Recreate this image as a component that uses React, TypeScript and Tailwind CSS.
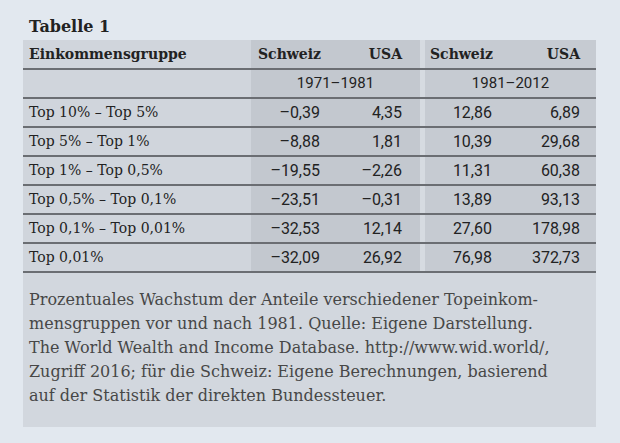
const serif = "font-['DejaVu_Serif','Liberation_Serif',serif]";
const sans = "font-['Roboto','Noto_Sans',sans-serif]";

// Zeilen der Tabelle: Gruppe, Schweiz/USA 1971–1981, Schweiz/USA 1981–2012
const rows = [
  ["Top 10% – Top 5%", "–0,39", "4,35", "12,86", "6,89"],
  ["Top 5% – Top 1%", "–8,88", "1,81", "10,39", "29,68"],
  ["Top 1% – Top 0,5%", "–19,55", "–2,26", "11,31", "60,38"],
  ["Top 0,5% – Top 0,1%", "–23,51", "–0,31", "13,89", "93,13"],
  ["Top 0,1% – Top 0,01%", "–32,53", "12,14", "27,60", "178,98"],
  ["Top 0,01%", "–32,09", "26,92", "76,98", "372,73"],
];

const grid = "grid grid-cols-[228px_76px_93px_5px_74px_97px] border-b-2 border-[#6b6e73]";

export default function App() {
  return (
    <div className="w-[620px] h-[443px] bg-[#e2e8ef] px-[23px] pt-[14px] text-[#222]">
      <h1 className={`${serif} font-bold text-[16px] leading-[26px] pl-[6px]`}>Tabelle 1</h1>

      <div className="w-[573px]">
        {/* Kopfzeile */}
        <div className={`${grid} h-[30px] ${serif} font-bold text-[14px]`}>
          <div className="bg-[#d0d5dc] pl-[6px] flex items-center">Einkommensgruppe</div>
          <div className="bg-[#c3c8cf] pl-[7px] flex items-center">Schweiz</div>
          <div className="bg-[#c3c8cf] pr-[18px] flex items-center justify-end">USA</div>
          <div className="bg-[#d6dbe1]" />
          <div className="bg-[#c6cbd2] pl-[5px] flex items-center">Schweiz</div>
          <div className="bg-[#c6cbd2] pr-[16px] flex items-center justify-end">USA</div>
        </div>

        {/* Zeitraum */}
        <div className={`${grid} h-[29px] ${sans} text-[15px]`}>
          <div className="bg-[#d0d5dc]" />
          <div className="col-span-2 bg-[#c3c8cf] flex items-center justify-center">1971–1981</div>
          <div className="bg-[#d6dbe1]" />
          <div className="col-span-2 bg-[#c6cbd2] flex items-center justify-center">1981–2012</div>
        </div>

        {rows.map((r) => (
          <div key={r[0]} className={`${grid} h-[29px] text-[16px]`}>
            <div className={`${serif} text-[14px] bg-[#d0d5dc] pl-[6px] flex items-center`}>{r[0]}</div>
            <div className={`${sans} bg-[#c3c8cf] pr-[7px] flex items-center justify-end`}>{r[1]}</div>
            <div className={`${sans} bg-[#c3c8cf] pr-[18px] flex items-center justify-end`}>{r[2]}</div>
            <div className="bg-[#d6dbe1]" />
            <div className={`${sans} bg-[#c6cbd2] pr-[7px] flex items-center justify-end`}>{r[3]}</div>
            <div className={`${sans} bg-[#c6cbd2] pr-[16px] flex items-center justify-end`}>{r[4]}</div>
          </div>
        ))}

        {/* Legende */}
        <div className={`bg-[#d2d7de] pl-[6px] pt-[15px] pb-[19px] ${serif} text-[16px] leading-[24px] text-[#474747] whitespace-nowrap`}>
          Prozentuales Wachstum der Anteile verschiedener Topeinkom-
          <br />
          mensgruppen vor und nach 1981. Quelle: Eigene Darstellung.
          <br />
          The World Wealth and Income Database. http://www.wid.world/,
          <br />
          Zugriff 2016; für die Schweiz: Eigene Berechnungen, basierend
          <br />
          auf der Statistik der direkten Bundessteuer.
        </div>
      </div>
    </div>
  );
}
